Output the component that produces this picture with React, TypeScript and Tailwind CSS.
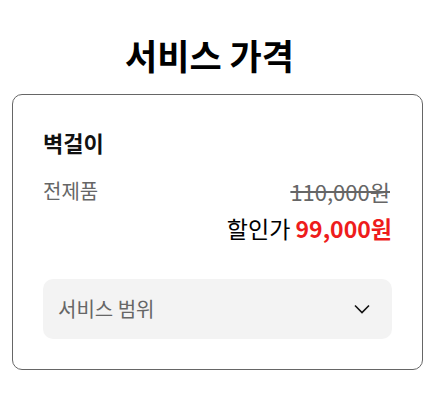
import React from "react";

export default function App() {
  return (
    <div className="w-[435px] h-[407px] bg-white" style={{ fontFamily: '"Noto Sans CJK KR", "Noto Sans", sans-serif' }}>
      <h1 className="pt-[31px] pr-[16px] text-center text-[35px] leading-[48px] font-bold text-black">서비스 가격</h1>
      <div className="mx-[12px] mt-[15px] border border-[#666] rounded-[10px] px-[30px] pt-[32px] pb-[30px]">
        <div className="text-[22px] leading-[30px] font-bold text-[#111]">벽걸이</div>
        <div className="mt-[19px] flex justify-between items-center leading-[30px]">
          <span className="text-[20px] text-[#666]">전제품</span>
          <span className="text-[22px] text-[#666] line-through mr-[2px]">110,000원</span>
        </div>
        <div className="mt-[7px] flex justify-end items-center text-[23px] leading-[30px]">
          <span className="text-black">할인가&nbsp;</span>
          <span className="text-[#ee1c1c] font-bold">99,000원</span>
        </div>
        <div className="mt-[36px] h-[60px] rounded-[10px] bg-[#f3f3f3] flex items-center justify-between pl-[15px] pr-[22px]">
          <span className="text-[20px] text-[#666]">서비스 범위</span>
          <svg width="16" height="10" viewBox="0 0 16 10" fill="none">
            <path d="M1 1.5 L8 8.5 L15 1.5" stroke="#111" strokeWidth="1.6" />
          </svg>
        </div>
      </div>
    </div>
  );
}
